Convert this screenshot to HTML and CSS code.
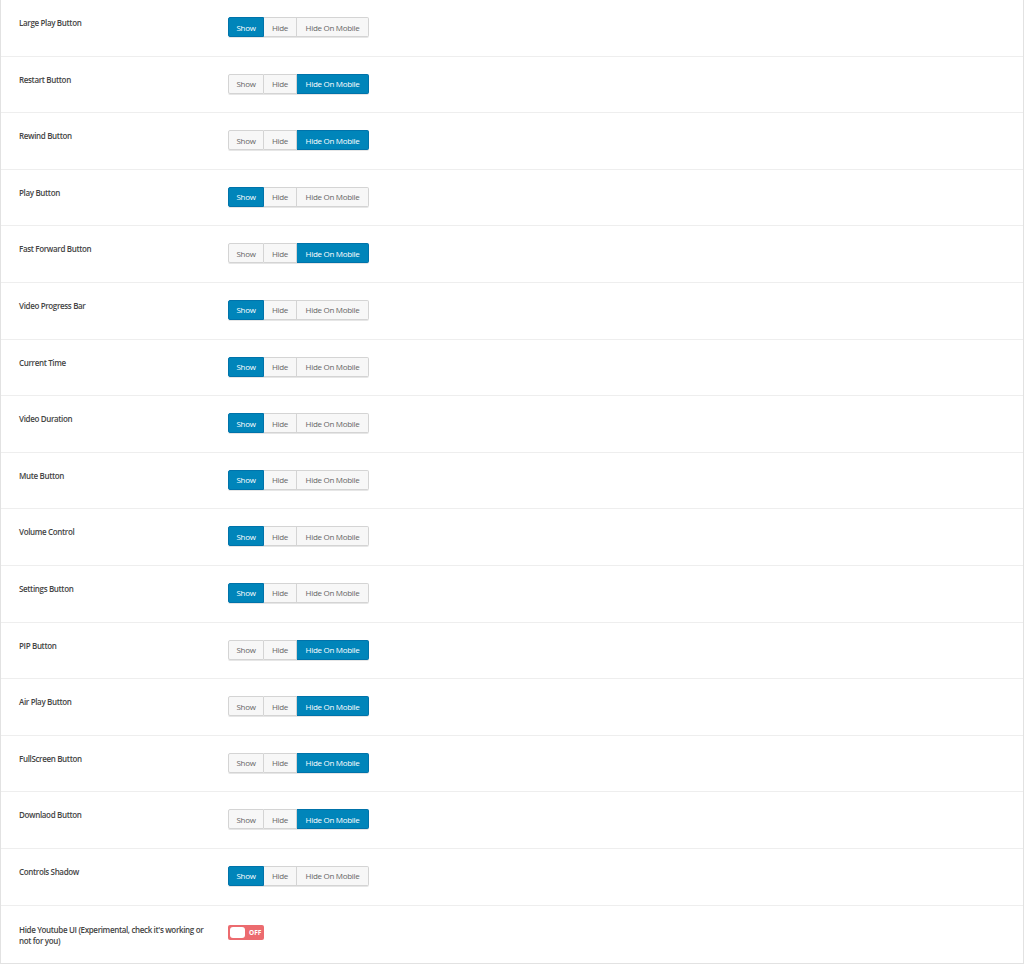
FILE: index.html
```html
<!DOCTYPE html>
<html>
<head>
<meta charset="utf-8">
<link rel="stylesheet" href="styles.css">
</head>
<body>
<div class="panel">
  <div class="row"><div class="label">Large Play Button</div><div class="group"><span class="btn on">Show</span><span class="btn">Hide</span><span class="btn">Hide On Mobile</span></div></div>
  <div class="row"><div class="label">Restart Button</div><div class="group"><span class="btn">Show</span><span class="btn">Hide</span><span class="btn on">Hide On Mobile</span></div></div>
  <div class="row"><div class="label">Rewind Button</div><div class="group"><span class="btn">Show</span><span class="btn">Hide</span><span class="btn on">Hide On Mobile</span></div></div>
  <div class="row"><div class="label">Play Button</div><div class="group"><span class="btn on">Show</span><span class="btn">Hide</span><span class="btn">Hide On Mobile</span></div></div>
  <div class="row"><div class="label">Fast Forward Button</div><div class="group"><span class="btn">Show</span><span class="btn">Hide</span><span class="btn on">Hide On Mobile</span></div></div>
  <div class="row"><div class="label">Video Progress Bar</div><div class="group"><span class="btn on">Show</span><span class="btn">Hide</span><span class="btn">Hide On Mobile</span></div></div>
  <div class="row"><div class="label">Current Time</div><div class="group"><span class="btn on">Show</span><span class="btn">Hide</span><span class="btn">Hide On Mobile</span></div></div>
  <div class="row"><div class="label">Video Duration</div><div class="group"><span class="btn on">Show</span><span class="btn">Hide</span><span class="btn">Hide On Mobile</span></div></div>
  <div class="row"><div class="label">Mute Button</div><div class="group"><span class="btn on">Show</span><span class="btn">Hide</span><span class="btn">Hide On Mobile</span></div></div>
  <div class="row"><div class="label">Volume Control</div><div class="group"><span class="btn on">Show</span><span class="btn">Hide</span><span class="btn">Hide On Mobile</span></div></div>
  <div class="row"><div class="label">Settings Button</div><div class="group"><span class="btn on">Show</span><span class="btn">Hide</span><span class="btn">Hide On Mobile</span></div></div>
  <div class="row"><div class="label">PIP Button</div><div class="group"><span class="btn">Show</span><span class="btn">Hide</span><span class="btn on">Hide On Mobile</span></div></div>
  <div class="row"><div class="label">Air Play Button</div><div class="group"><span class="btn">Show</span><span class="btn">Hide</span><span class="btn on">Hide On Mobile</span></div></div>
  <div class="row"><div class="label">FullScreen Button</div><div class="group"><span class="btn">Show</span><span class="btn">Hide</span><span class="btn on">Hide On Mobile</span></div></div>
  <div class="row"><div class="label">Downlaod Button</div><div class="group"><span class="btn">Show</span><span class="btn">Hide</span><span class="btn on">Hide On Mobile</span></div></div>
  <div class="row"><div class="label">Controls Shadow</div><div class="group"><span class="btn on">Show</span><span class="btn">Hide</span><span class="btn">Hide On Mobile</span></div></div>
  <div class="row last"><div class="label">Hide Youtube UI (Experimental, check it's working or not for you)</div><div class="toggle"><span class="knob"></span><span class="off">OFF</span></div></div>
</div>
</body>
</html>
```
FILE: styles.css
```css
html, body {
  margin: 0;
  padding: 0;
  background: #fff;
}
.panel {
  width: 1024px;
  height: 964px;
  box-sizing: border-box;
  border: 1px solid #e2e2e2;
  border-top: none;
  font-family: "Open Sans", "Noto Sans", sans-serif;
}
.row {
  height: 56.6px;
  box-sizing: border-box;
  border-bottom: 1px solid #eeeeee;
  display: flex;
  align-items: flex-start;
  padding: 17px 0 0 18px;
}
.row.last {
  border-bottom: none;
  height: 58px;
  padding-top: 18px;
}
.label {
  width: 209px;
  font-size: 8px;
  font-weight: 600;
  letter-spacing: -0.35px;
  color: #444;
  line-height: 11px;
}
.row.last .label {
  width: 192px;
  padding-right: 17px;
}
.row.last .toggle {
  margin-top: 1px;
}
.group {
  display: flex;
  height: 20px;
  border-radius: 2px;
  box-shadow: 0 1px 0 #e6e6e6;
}
.btn {
  display: flex;
  align-items: center;
  justify-content: center;
  height: 20px;
  box-sizing: border-box;
  font-size: 8px;
  letter-spacing: -0.3px;
  color: #666;
  background: #f7f7f7;
  border: 1px solid #d4d4d4;
  border-left: none;
}
.btn:nth-child(1) { width: 36px; border-left: 1px solid #d4d4d4; border-radius: 2px 0 0 2px; }
.btn:nth-child(2) { width: 33px; }
.btn:nth-child(3) { width: 72px; border-radius: 0 2px 2px 0; }
.btn.on {
  background: #0085ba;
  border-color: #0073aa;
  color: #fff;
}
.toggle {
  width: 36px;
  height: 15px;
  background: #ec6b6f;
  border-radius: 2px;
  display: flex;
  align-items: center;
  padding: 0 2px;
  box-sizing: border-box;
}
.knob {
  width: 15px;
  height: 11px;
  background: #fff;
  border-radius: 3px;
}
.off {
  font-size: 6.5px;
  font-weight: 700;
  color: #fff;
  margin-left: 4px;
}
```
